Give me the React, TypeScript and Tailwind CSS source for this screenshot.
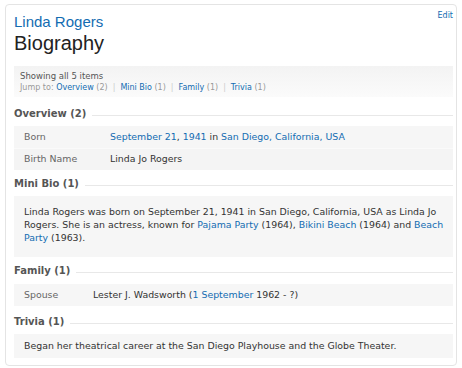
import React from "react";

const A = ({ children }: { children: React.ReactNode }) => (
  <a className="text-[#136cb2]">{children}</a>
);

function Header({ title, className = "" }: { title: string; className?: string }) {
  return (
    <div className={`flex items-center h-[14px] ${className}`}>
      <span className="text-[10px] leading-[14px] font-bold text-[#555] whitespace-nowrap">{title}</span>
      <div className="flex-1 h-px bg-[#e8e8e8] ml-[6px] mt-[2px]" />
    </div>
  );
}

export default function App() {
  return (
    <div className="bg-white w-[462px] h-[368px] pt-[4px] pl-[5px] font-['DejaVu_Sans',sans-serif] text-[#333]">
      <div className="w-[452px] h-[362px] border border-[#e4e4e4] rounded-[4px] pl-[8px] pr-[3px] pt-[8px]">
        <div className="flex justify-between">
          <div className="font-['Liberation_Sans',sans-serif] text-[#136cb2] text-[15px] leading-[17px]">Linda Rogers</div>
          <div className="text-[8px] leading-[10px] text-[#136cb2] -mt-[2px]">Edit</div>
        </div>
        <div className="font-['Liberation_Sans',sans-serif] text-[20px] leading-[24px] text-[#222] mt-[1px]">Biography</div>

        <div className="mt-[11px] h-[31px] bg-gradient-to-b from-[#f3f3f3] to-[#fbfbfb] px-[6px] pt-[5px] text-[8.5px] leading-[11px]">
          <div className="text-[#555]">Showing all 5 items</div>
          <div className="text-[#999] text-[8px]">
            Jump to: <A>Overview</A> (2)<span className="text-[#ccc] mx-[5px]">|</span>
            <A>Mini Bio</A> (1)<span className="text-[#ccc] mx-[5px]">|</span>
            <A>Family</A> (1)<span className="text-[#ccc] mx-[5px]">|</span>
            <A>Trivia</A> (1)
          </div>
        </div>

        <Header title="Overview (2)" className="mt-[10px]" />
        <div className="mt-[5px] text-[9.4px]">
          <div className="flex items-center h-[22px] bg-[#f6f6f6] px-[10px]">
            <span className="w-[86px] text-[#666]">Born</span>
            <span>
              <A>September 21</A>, <A>1941</A> in <A>San Diego, California, USA</A>
            </span>
          </div>
          <div className="flex items-center h-[22px] bg-[#f4f4f4] border-t border-[#fafafa] px-[10px]">
            <span className="w-[86px] text-[#666]">Birth Name</span>
            <span>Linda Jo Rogers</span>
          </div>
        </div>

        <Header title="Mini Bio (1)" className="mt-[7px]" />
        <div className="mt-[5px] bg-[#f6f6f6] pl-[10px] pr-[2px] pt-[9px] pb-[13px] text-[9.4px] leading-[13px]">
          Linda Rogers was born on September 21, 1941 in San Diego, California, USA as Linda Jo Rogers. She is an actress, known for{" "}
          <A>Pajama Party</A> (1964), <A>Bikini Beach</A> (1964) and <A>Beach</A> <A>Party</A> (1963).
        </div>

        <Header title="Family (1)" className="mt-[7px]" />
        <div className="mt-[6px] flex items-center h-[22px] bg-[#f6f6f6] px-[10px] text-[9.4px]">
          <span className="w-[69px] text-[#666]">Spouse</span>
          <span>
            Lester J. Wadsworth (<A>1 September</A> 1962 - ?)
          </span>
        </div>

        <Header title="Trivia (1)" className="mt-[9px]" />
        <div className="mt-[5px] flex items-center h-[24px] bg-[#f6f6f6] px-[10px] text-[9.4px]">
          Began her theatrical career at the San Diego Playhouse and the Globe Theater.
        </div>
      </div>
    </div>
  );
}
